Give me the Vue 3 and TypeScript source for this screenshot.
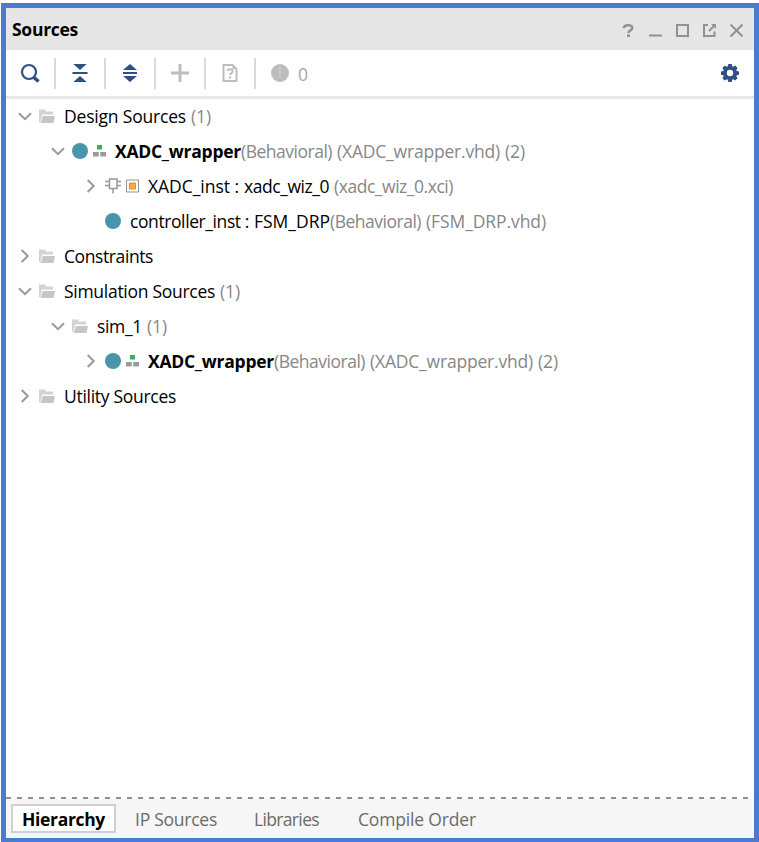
<script setup lang="ts">
import type { Directive } from 'vue'

type Kind = 'folder' | 'module' | 'top' | 'ip'
interface Part { text: string; width: number; tone?: 'bold' | 'dim'; gap?: boolean }
interface Row { level: number; state: 'open' | 'closed' | 'leaf'; kind: Kind; parts: Part[] }

const wrapper: Part[] = [
  { text: 'XADC_wrapper', width: 126, tone: 'bold' },
  { text: '(Behavioral)', width: 91, tone: 'dim' },
  { text: '(XADC_wrapper.vhd)', width: 163, tone: 'dim', gap: true },
  { text: '(2)', width: 20, tone: 'dim', gap: true },
]
const one: Part = { text: '(1)', width: 20, tone: 'dim', gap: true }

const rows: Row[] = [
  { level: 0, state: 'open', kind: 'folder', parts: [{ text: 'Design Sources', width: 122 }, one] },
  { level: 1, state: 'open', kind: 'top', parts: wrapper },
  { level: 2, state: 'closed', kind: 'ip', parts: [
    { text: 'XADC_inst :', width: 91 },
    { text: 'xadc_wiz_0', width: 85, gap: true },
    { text: '(xadc_wiz_0.xci)', width: 119, tone: 'dim', gap: true },
  ] },
  { level: 2, state: 'leaf', kind: 'module', parts: [
    { text: 'controller_inst :', width: 119 },
    { text: 'FSM_DRP', width: 76, gap: true },
    { text: '(Behavioral)', width: 91, tone: 'dim' },
    { text: '(FSM_DRP.vhd)', width: 120, tone: 'dim', gap: true },
  ] },
  { level: 0, state: 'closed', kind: 'folder', parts: [{ text: 'Constraints', width: 89 }] },
  { level: 0, state: 'open', kind: 'folder', parts: [{ text: 'Simulation Sources', width: 151 }, one] },
  { level: 1, state: 'open', kind: 'folder', parts: [{ text: 'sim_1', width: 45 }, one] },
  { level: 2, state: 'closed', kind: 'top', parts: wrapper },
  { level: 0, state: 'closed', kind: 'folder', parts: [{ text: 'Utility Sources', width: 112 }] },
]

const tabs = [
  { text: 'Hierarchy', width: 83, active: true },
  { text: 'IP Sources', width: 82, active: false },
  { text: 'Libraries', width: 65, active: false },
  { text: 'Compile Order', width: 118, active: false },
]

// Spreads a label's letters so that it fills its column width.
const vFit: Directive<HTMLElement, number> = {
  mounted(el, { value }) {
    el.style.letterSpacing = '0px'
    const natural = el.getBoundingClientRect().width
    el.style.letterSpacing = `${(value - natural) / (el.textContent ?? ' ').length}px`
  },
}
</script>

<template>
  <main class="panel">
    <header class="title">
      <h1><span v-fit="66">Sources</span></h1>
      <div class="window-tools">
        <svg width="14" height="14" viewBox="0 0 14 14"><path class="thick" d="M2.8 4.2C3 2 5 1.3 7 1.3c2.700 0 4.300.9 4.300 2.700 0 2.500-3.800 2.200-3.800 5" /><path class="solid" d="M6 10.500h3v2.500H6z" /></svg>
        <svg width="14" height="14" viewBox="0 0 14 14"><path class="solid" d="M1 10.500h13v2H1z" /></svg>
        <svg width="14" height="14" viewBox="0 0 14 14"><path class="line" d="M2 1h11v11H2z" /></svg>
        <svg width="14" height="14" viewBox="0 0 14 14"><path class="line" d="M6 1H2v11h10.500V7.500M7 7l5-5" /><path class="solid" d="M9 0h5v5z" /></svg>
        <svg width="14" height="14" viewBox="0 0 14 14"><path class="line" d="M1.500.5l12 12M13.500.5l-12 12" /></svg>
      </div>
    </header>

    <nav class="toolbar">
      <span class="tool"><svg width="20" height="20" viewBox="0 0 20 20"><circle cx="9" cy="9" r="7" class="navy-line" /><path d="M14 14.500l4.500 4" class="navy-handle" /></svg></span>
      <span class="tool"><svg width="20" height="20" viewBox="0 0 20 20"><path class="navy" d="M3.300 1h13.400L10 7zM2.500 9h15v2h-15zM3.300 19h13.400L10 13z" /></svg></span>
      <span class="tool"><svg width="20" height="20" viewBox="0 0 20 20"><path class="navy" d="M3 7h14l-7-6zM3 9h14v2H3zM3 13h14l-7 6z" /></svg></span>
      <span class="tool"><svg width="20" height="20" viewBox="0 0 20 20"><path class="pale" d="M8.500 1h3v7.500H19v3h-7.500V19h-3v-7.500H1v-3h7.500z" /></svg></span>
      <span class="tool"><svg width="20" height="20" viewBox="0 0 20 20"><path class="pale-line" d="M3.500 2h9l4 4v12h-13z" /><path class="pale" d="M12.500 1.500l4.500 4.500h-4.500z" /><path class="pale-line" d="M7.500 8c.2-2.300 5.200-2.300 5.200.2 0 1.800-2.600 1.800-2.600 3.800" /><path class="pale" d="M9 13.500h2.200v2H9z" /></svg></span>
      <span class="tool messages">
        <svg width="20" height="20" viewBox="0 0 20 20"><circle class="badge" cx="10" cy="10" r="9" /><path class="mark" d="M9 4.500h2v7H9zM9 13h2v2H9z" /></svg>
        <span class="count">0</span>
      </span>
      <svg class="gear" width="20" height="20" viewBox="0 0 20 20">
        <path class="navy" fill-rule="evenodd" d="M8.300 1h3.400l.5 2.300 1 .4 2-1.200 2.400 2.400-1.300 2 .4 1 2.300.5v3.300l-2.300.5-.4 1 1.300 2-2.400 2.300-2-1.200-1 .4-.5 2.300H8.300l-.5-2.300-1-.4-2 1.200-2.400-2.300 1.300-2-.4-1L1 11.700V8.400l2.300-.5.4-1-1.300-2 2.400-2.400 2 1.200 1-.4zM10 6.800a3.200 3.200 0 1 0 0 6.400 3.200 3.200 0 0 0 0-6.400z" />
      </svg>
    </nav>

    <section class="tree">
      <div v-for="(row, i) in rows" :key="i" class="row" :class="'level-' + row.level">
        <svg class="chevron" width="14" height="14" viewBox="0 0 14 14">
          <path v-if="row.state === 'open'" d="M1 4.200l6 6 6-6" />
          <path v-else-if="row.state === 'closed'" d="M3.700 1l6 6-6 6" />
        </svg>
        <svg v-if="row.kind === 'folder'" width="16" height="16" viewBox="0 0 16 16">
          <path class="folder-back" d="M0 1.500h6.500v2H14v3H3L1.500 14H0z" />
          <path class="folder-front" d="M3.800 8H16l-1.500 7H1.800z" />
        </svg>
        <svg v-else-if="row.kind === 'ip'" width="16" height="18" viewBox="0 0 16 18">
          <path class="chip" d="M4.500 2h7.500v9.500H4.500zM0 4.500h4.500M0 8.500h4.500M12 4.500h4M12 8.500h4M8 11.500v5" />
        </svg>
        <svg v-else width="16" height="16" viewBox="0 0 16 16"><circle class="entity" cx="8" cy="8" r="8" /></svg>
        <svg v-if="row.kind === 'top'" class="second" width="13" height="12" viewBox="0 0 13 12">
          <path class="green" d="M4 0h5v4.500H4z" /><path class="gray" d="M0 7h5.700v4.500H0zM7.300 7H13v4.500H7.300z" />
        </svg>
        <svg v-if="row.kind === 'ip'" class="second" width="13" height="14" viewBox="0 0 13 14">
          <path class="square" d="M.5 1h12v12H.5z" /><path class="orange" d="M3.500 4h6v6h-6z" />
        </svg>
        <span class="label">
          <span v-for="part in row.parts" :key="part.text" v-fit="part.width" :class="[part.tone, { gap: part.gap }]">{{ part.text }}</span>
        </span>
      </div>
    </section>

    <div class="dashes"></div>
    <footer class="tabs">
      <button v-for="tab in tabs" :key="tab.text" class="tab" :class="{ active: tab.active }"><span v-fit="tab.width">{{ tab.text }}</span></button>
    </footer>
  </main>
</template>

<style>
body { background: #fff; }
</style>

<style scoped>
.panel {
  box-sizing: border-box;
  width: 758px;
  height: 839px;
  margin: 0;
  border: 5px solid #4a7ccd;
  border-bottom-width: 4px;
  display: flex;
  flex-direction: column;
  background: #fff;
  color: #000;
  font: 17.5px/24px "Open Sans", "Noto Sans", sans-serif;
  white-space: nowrap;
}
:global(#app) { padding: 3px 0 0 1px; }
svg { display: block; flex: none; }
.title {
  height: 42px;
  flex: none;
  box-sizing: border-box;
  padding: 0 11px 0 6px;
  background: #e6e6e6;
  display: flex;
  align-items: center;
  justify-content: space-between;
}
h1 { margin: 0; font-size: 17.500px; line-height: 24px; font-weight: 700; }
.window-tools { display: flex; gap: 13px; padding-top: 3px; }
.solid { fill: #919191; }
.line { fill: none; stroke: #919191; stroke-width: 2; }
.thick { fill: none; stroke: #919191; stroke-width: 2.500; }
.toolbar {
  height: 46px;
  flex: none;
  display: flex;
  align-items: center;
  border-bottom: 3px solid #e6e6e6;
}
.tool {
  box-sizing: border-box;
  width: 50px;
  height: 31px;
  border-right: 2px solid #dadada;
  display: flex;
  align-items: center;
  justify-content: center;
}
.messages { width: 66px; border: 0; justify-content: flex-start; padding-left: 14px; gap: 8px; }
.count { color: #a5a5a5; padding-top: 2px; font-size: 17.500px; }
.gear { margin-left: auto; margin-right: 14px; }
.navy { fill: #2e5085; }
.navy-line { fill: none; stroke: #2e5085; stroke-width: 2.200; }
.navy-handle { stroke: #2e5085; stroke-width: 3.600; }
.pale { fill: #bdbdbd; }
.pale-line { fill: none; stroke: #bdbdbd; stroke-width: 2; }
.badge { fill: #bdbdbd; }
.mark { fill: #cacaca; }
.tree { flex: 1; }
.row { height: 35px; display: flex; align-items: center; padding-left: 12px; box-sizing: border-box; padding-bottom: 1px; }
.level-1 { padding-left: 45px; }
.level-2 { padding-left: 78px; }
.chevron { margin-right: 7px; }
.chevron path { fill: none; stroke: #999; stroke-width: 2; }
.second { margin-left: 5px; }
.label { margin-left: 9px; display: flex; }
.bold { font-weight: 700; }
.dim { color: #878787; }
.gap { margin-left: 5px; }
.folder-back { fill: #d3d3d3; }
.folder-front { fill: #c6c6c6; }
.entity { fill: #4895ac; }
.green { fill: #35b157; }
.gray { fill: #999; }
.chip { fill: none; stroke: #999; stroke-width: 1.500; }
.square { fill: #fff; stroke: #8f8f99; stroke-width: 1; }
.orange { fill: #ffaa3c; stroke: #e88c28; stroke-width: 1; }
.dashes {
  height: 2px;
  flex: none;
  background: repeating-linear-gradient(90deg, #919191 0 5px, #fff 5px 11px);
}
.tabs {
  height: 39px;
  flex: none;
  box-sizing: border-box;
  padding: 5px 0 5px 5px;
  background: #f6f6f6;
  display: flex;
}
.tab {
  box-sizing: border-box;
  margin: 0;
  padding: 0 9px;
  border: 2px solid transparent;
  background: transparent;
  color: #6b6b6b;
  font: inherit;
  margin-right: 15px;
}
.tab:nth-child(1) { margin-right: 8px; }
.tab:nth-child(3) { margin-right: 17px; }
.tab.active { background: #fff; border-color: #d0d0d0; color: #000; font-weight: 700; }
</style>
